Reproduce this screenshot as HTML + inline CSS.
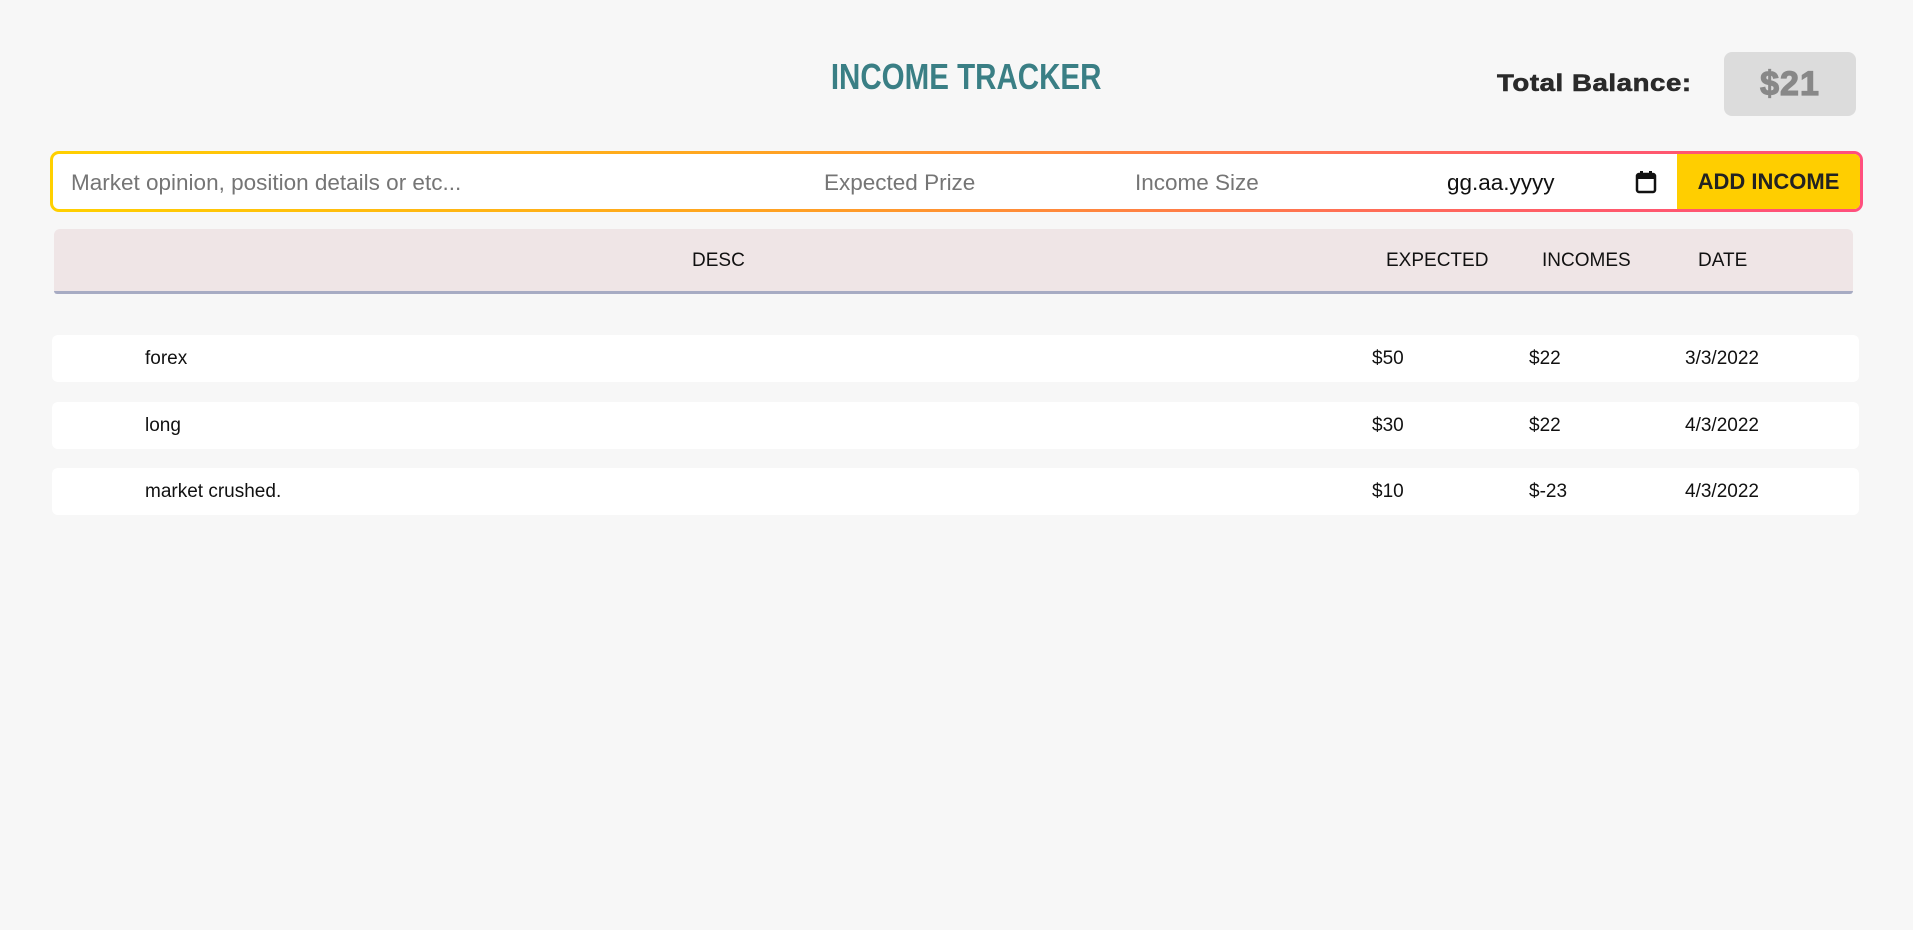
<!DOCTYPE html>
<html><head><style>
body{margin:0;width:1913px;height:930px;background:#f7f7f7;font-family:"Liberation Sans",Arial,sans-serif;position:relative;overflow:hidden}
.a{position:absolute;white-space:nowrap}
.title{left:830px;top:56px;text-align:center;font-size:36px;font-weight:bold;color:#3a7f85;transform:scaleX(.82);transform-origin:left top;width:332px}
.tb{left:1497px;top:70px;font-size:24px;font-weight:bold;color:#2a2a2a;letter-spacing:.5px;-webkit-text-stroke:.6px #2a2a2a;transform:scaleX(1.15);transform-origin:left top}
.bal{left:1724px;top:52px;width:132px;height:64px;background:#dcdcdc;border-radius:8px;color:#888;font-size:34px;font-weight:bold;text-align:center;line-height:64px;-webkit-text-stroke:1.2px #888;letter-spacing:1px}
.bar{left:50px;top:151px;width:1813px;height:61px;border-radius:9px;background:linear-gradient(90deg,#ffd000,#ffa223 40%,#ff5a6a 85%,#ff4f7e)}
.inner{position:absolute;left:3px;top:3px;right:3px;bottom:3px;background:#fff;border-radius:6px;overflow:hidden}
.ph{position:absolute;top:16px;font-size:22.5px;color:#757575}
.btn{position:absolute;right:0;top:0;bottom:0;width:183px;background:#ffce00;color:#222;font-weight:bold;font-size:22px;line-height:55px;text-align:center}
.hdr{left:54px;top:229px;width:1799px;height:62px;background:#efe5e6;border-radius:6px 6px 3px 3px;border-bottom:3px solid #a7abc3}
.h{position:absolute;top:21px;font-size:19px;color:#111}
.row{left:52px;width:1807px;height:47px;background:#fff;border-radius:6px}
.c{position:absolute;top:13px;font-size:19px;color:#111}
</style></head><body>
<div class="a title">INCOME TRACKER</div>
<div class="a tb">Total Balance:</div>
<div class="a bal">$21</div>
<div class="a bar"><div class="inner">
<span class="ph" style="left:18px">Market opinion, position details or etc...</span>
<span class="ph" style="left:771px">Expected Prize</span>
<span class="ph" style="left:1082px">Income Size</span>
<span class="ph" style="left:1394px;color:#111">gg.aa.yyyy</span>
<svg style="position:absolute;left:1582px;top:16px" width="22" height="24" viewBox="0 0 22 24"><rect x="2" y="4" width="18" height="18" rx="2" fill="none" stroke="#111" stroke-width="2.5"/><rect x="2" y="4" width="18" height="5" fill="#111"/><rect x="5" y="1" width="3" height="5" fill="#111"/><rect x="14" y="1" width="3" height="5" fill="#111"/></svg>
<div class="btn">ADD INCOME</div>
</div></div>
<div class="a hdr">
<span class="h" style="left:638px">DESC</span>
<span class="h" style="left:1332px">EXPECTED</span>
<span class="h" style="left:1488px">INCOMES</span>
<span class="h" style="left:1644px">DATE</span>
</div>
<div class="a row" style="top:335px"><span class="c" style="left:93px">forex</span><span class="c" style="left:1320px">$50</span><span class="c" style="left:1477px">$22</span><span class="c" style="left:1633px">3/3/2022</span></div>
<div class="a row" style="top:402px"><span class="c" style="left:93px">long</span><span class="c" style="left:1320px">$30</span><span class="c" style="left:1477px">$22</span><span class="c" style="left:1633px">4/3/2022</span></div>
<div class="a row" style="top:468px"><span class="c" style="left:93px">market crushed.</span><span class="c" style="left:1320px">$10</span><span class="c" style="left:1477px">$-23</span><span class="c" style="left:1633px">4/3/2022</span></div>
</body></html>
